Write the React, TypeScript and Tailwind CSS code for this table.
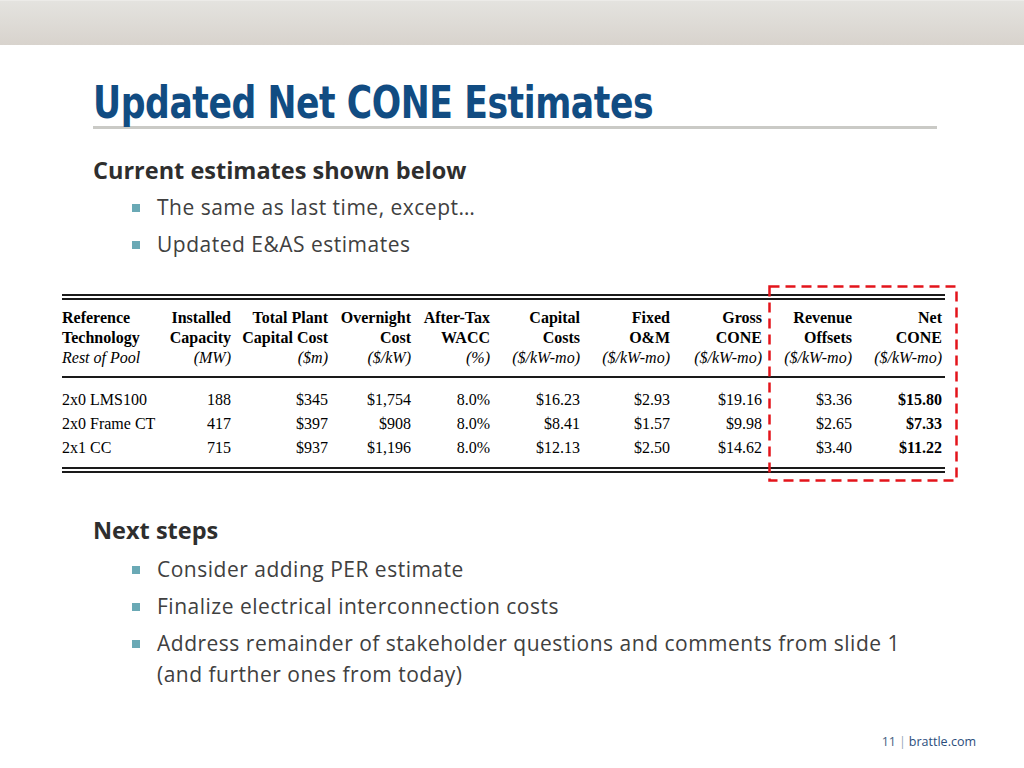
import React from "react";

const cols = [
  { h1: "Reference", h2: "Technology", unit: "Rest of Pool", w: "w-[101px]", left: true },
  { h1: "Installed", h2: "Capacity", unit: "(MW)", w: "w-[68px]" },
  { h1: "Total Plant", h2: "Capital Cost", unit: "($m)", w: "w-[97px]" },
  { h1: "Overnight", h2: "Cost", unit: "($/kW)", w: "w-[83px]" },
  { h1: "After-Tax", h2: "WACC", unit: "(%)", w: "w-[79px]" },
  { h1: "Capital", h2: "Costs", unit: "($/kW-mo)", w: "w-[90px]" },
  { h1: "Fixed", h2: "O&M", unit: "($/kW-mo)", w: "w-[90px]" },
  { h1: "Gross", h2: "CONE", unit: "($/kW-mo)", w: "w-[92px]" },
  { h1: "Revenue", h2: "Offsets", unit: "($/kW-mo)", w: "w-[90px]" },
  { h1: "Net", h2: "CONE", unit: "($/kW-mo)", w: "w-[90px]" },
];

const rows = [
  ["2x0 LMS100", "188", "$345", "$1,754", "8.0%", "$16.23", "$2.93", "$19.16", "$3.36", "$15.80"],
  ["2x0 Frame CT", "417", "$397", "$908", "8.0%", "$8.41", "$1.57", "$9.98", "$2.65", "$7.33"],
  ["2x1 CC", "715", "$937", "$1,196", "8.0%", "$12.13", "$2.50", "$14.62", "$3.40", "$11.22"],
];

function Bullet({ children }: { children: React.ReactNode }) {
  return (
    <li className="flex py-[3px] leading-[31px]">
      <span className="w-[64px] shrink-0 flex justify-end pr-[17px] pt-[12px]">
        <span className="block w-[8px] h-[8px] bg-[#6aa9b5]" />
      </span>
      <span>{children}</span>
    </li>
  );
}

function Heading({ children }: { children: React.ReactNode }) {
  return (
    <h2 className="pl-[93px] text-[23.5px] leading-[30px] font-bold text-[#2e2e2e]">
      {children}
    </h2>
  );
}

function CellRow({ cells, className, boldLast }: { cells: string[]; className?: string; boldLast?: boolean }) {
  return (
    <div className={"flex " + (className ?? "")}>
      {cells.map((c, i) => (
        <div
          key={i}
          className={
            cols[i].w +
            " whitespace-nowrap " +
            (cols[i].left ? "text-left" : "text-right") +
            (boldLast && i === cells.length - 1 ? " font-bold" : "")
          }
        >
          {c}
        </div>
      ))}
    </div>
  );
}

function ConeTable() {
  return (
    <div className="relative ml-[62px] w-[883px] text-[16px] text-black font-['Liberation_Serif',serif]">
      <div className="h-[2px] bg-[#1a1a1a]" />
      <div className="h-[2px]" />
      <div className="h-[2px] bg-[#1a1a1a]" />
      <div className="pt-[8px] pb-[8px] leading-[20px]">
        <CellRow cells={cols.map((c) => c.h1)} className="font-bold" />
        <CellRow cells={cols.map((c) => c.h2)} className="font-bold" />
        <CellRow cells={cols.map((c) => c.unit)} className="italic" />
      </div>
      <div className="h-[2px] bg-[#1a1a1a]" />
      <div className="pt-[10px] pb-[7px] leading-[24px]">
        {rows.map((r, i) => (
          <CellRow key={i} cells={r} boldLast />
        ))}
      </div>
      <div className="h-[2px] bg-[#1a1a1a]" />
      <div className="h-[2px]" />
      <div className="h-[2px] bg-[#1a1a1a]" />

      <svg className="absolute left-[706px] top-[-9px] pointer-events-none" width="190" height="198">
        <rect
          x="1.5"
          y="1.5"
          width="187"
          height="194"
          fill="none"
          stroke="#e3141b"
          strokeWidth="2.5"
          strokeDasharray="10 6"
        />
      </svg>
    </div>
  );
}

export default function App() {
  return (
    <div className="w-[1024px] h-[768px] bg-white flex flex-col overflow-hidden font-['Open_Sans',sans-serif]">
      <div className="h-[45px] shrink-0 bg-gradient-to-b from-[#e4e3df] to-[#d8d3cd] border-t border-[#ecebe8]" />

      <h1 className="mt-[36px] ml-[93px] self-start origin-left scale-x-[0.875] text-[44px] leading-[44px] font-bold text-[#114c82] tracking-[-0.5px] whitespace-nowrap font-['DejaVu_Sans_Condensed','DejaVu_Sans',sans-serif]">
        Updated Net CONE Estimates
      </h1>
      <div className="mt-[1px] ml-[93px] w-[844px] h-[3px] bg-[#cacac6]" />

      <div className="mt-[26px]">
        <Heading>Current estimates shown below</Heading>
        <ul className="mt-[4px] pl-[93px] text-[21px] tracking-[0.5px] text-[#404040]">
          <Bullet>The same as last time, except…</Bullet>
          <Bullet>Updated E&amp;AS estimates</Bullet>
        </ul>
      </div>

      <div className="mt-[31px]">
        <ConeTable />
      </div>

      <div className="mt-[42px]">
        <Heading>Next steps</Heading>
        <ul className="mt-[6px] pl-[93px] text-[21px] tracking-[0.5px] text-[#404040]">
          <Bullet>Consider adding PER estimate</Bullet>
          <Bullet>Finalize electrical interconnection costs</Bullet>
          <Bullet>
            <span className="block w-[770px]">
              Address remainder of stakeholder questions and comments from slide 1 (and further ones from today)
            </span>
          </Bullet>
        </ul>
      </div>

      <div className="mt-auto pb-[18px] pr-[48px] flex justify-end items-center text-[12.5px] leading-[16px]">
        <span className="text-[#4a5f80]">11</span>
        <span className="mx-[3px] text-[#9aa7b8]">|</span>
        <span className="text-[#2c4d7c]">brattle.com</span>
      </div>
    </div>
  );
}
